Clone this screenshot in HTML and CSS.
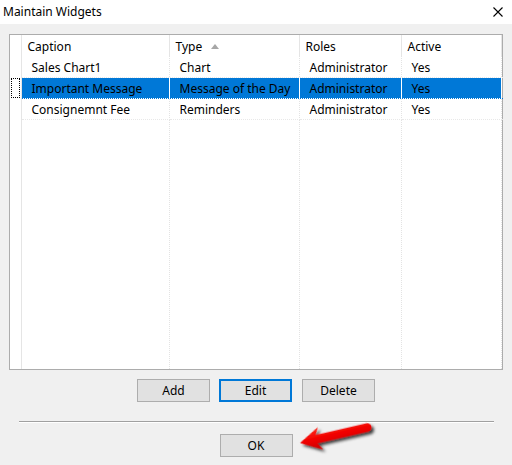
FILE: index.html
```html
<!DOCTYPE html>
<html lang="en">
<head>
    <meta charset="UTF-8">
    <title>Maintain Widgets</title>
    <link rel="stylesheet" href="styles.css">
</head>
<body>
    <div class="window">
        <div class="title-bar">
            <span class="title">Maintain Widgets</span>
            <svg class="close" width="10" height="10" viewBox="0 0 10 10">
                <path d="M0.5 0.5 L9.5 9.5 M9.5 0.5 L0.5 9.5" stroke="#000" stroke-width="1.1" fill="none"/>
            </svg>
        </div>

        <div class="content">
            <div class="grid">
                <table class="widgets">
                    <colgroup>
                        <col class="c-sel">
                        <col class="c-caption">
                        <col class="c-type">
                        <col class="c-roles">
                        <col class="c-active">
                        <col>
                    </colgroup>
                    <thead>
                        <tr>
                            <th></th>
                            <th>Caption</th>
                            <th>Type <span class="sort-up"></span></th>
                            <th>Roles</th>
                            <th>Active</th>
                            <th class="rest"></th>
                        </tr>
                    </thead>
                    <tbody>
                        <tr>
                            <td class="sel"></td>
                            <td>Sales Chart1</td>
                            <td>Chart</td>
                            <td>Administrator</td>
                            <td>Yes</td>
                            <td class="rest"></td>
                        </tr>
                        <tr class="selected">
                            <td class="sel"><span class="focus"></span></td>
                            <td>Important Message</td>
                            <td>Message of the Day</td>
                            <td>Administrator</td>
                            <td>Yes</td>
                            <td class="rest"></td>
                        </tr>
                        <tr>
                            <td class="sel"></td>
                            <td>Consignemnt Fee</td>
                            <td>Reminders</td>
                            <td>Administrator</td>
                            <td>Yes</td>
                            <td class="rest"></td>
                        </tr>
                        <tr class="filler">
                            <td class="sel"></td>
                            <td></td>
                            <td></td>
                            <td></td>
                            <td></td>
                            <td class="rest"></td>
                        </tr>
                    </tbody>
                </table>
            </div>

            <div class="actions">
                <button class="btn">Add</button>
                <button class="btn default">Edit</button>
                <button class="btn">Delete</button>
            </div>

            <div class="separator"></div>

            <div class="footer">
                <button class="btn">OK</button>
            </div>
        </div>

        <!-- red callout arrow pointing at OK -->
        <svg class="callout" width="512" height="465" viewBox="0 0 512 465">
            <defs>
                <filter id="shadow" x="-20%" y="-40%" width="150%" height="200%">
                    <feDropShadow dx="2" dy="3" stdDeviation="1.6" flood-color="#000" flood-opacity="0.75"/>
                </filter>
                <linearGradient id="red" x1="0" y1="0" x2="0" y2="1">
                    <stop offset="0" stop-color="#ff2a1a"/>
                    <stop offset="0.5" stop-color="#f00000"/>
                    <stop offset="1" stop-color="#c80000"/>
                </linearGradient>
            </defs>
            <g transform="translate(300 443) rotate(-13)" filter="url(#shadow)">
                <path d="M0 0 L21 -11.5 L17 -4.2 L69 -4.2 A4.2 4.2 0 0 1 69 4.2 L17 4.2 L21 11.5 Z" fill="url(#red)"/>
            </g>
        </svg>
    </div>
</body>
</html>
```

FILE: styles.css
```css
* {
    margin: 0;
    padding: 0;
    box-sizing: border-box;
}

body {
    font-family: "Noto Sans", "Open Sans", sans-serif;
    font-size: 12px;
    color: #000;
    background: #f0f0f0;
}

.window {
    position: relative;
    width: 512px;
    height: 465px;
    background: #f0f0f0;
}

.title-bar {
    height: 24px;
    background: #fff;
    display: flex;
    align-items: center;
    justify-content: space-between;
    padding: 0 9px 1px 3px;
}

.title {
    font-size: 12px;
}

.close {
    display: block;
    margin-top: 1px;
}

.content {
    padding-top: 10px;
}

/* list view */
.grid {
    margin-left: 9px;
    width: 494px;
    height: 336px;
    border: 1px solid #acacac;
    background: #fff;
}

.widgets {
    width: 492px;
    height: 334px;
    border-collapse: collapse;
    table-layout: fixed;
}

.c-sel { width: 11px; }
.c-caption { width: 148px; }
.c-type { width: 130px; }
.c-roles { width: 102px; }
.c-active { width: 100px; }

.widgets th {
    height: 21px;
    font-weight: normal;
    text-align: left;
    padding: 1px 0 0 6px;
    border-right: 1px solid #e5e5e5;
    white-space: nowrap;
}

.widgets td {
    height: 21px;
    padding: 2px 0 0 10px;
    border-right: 1px dotted #e3e3e3;
    border-bottom: 1px dotted #e8e8e8;
    white-space: nowrap;
    overflow: hidden;
}

.widgets th.rest,
.widgets td.rest {
    border-right: none;
    padding: 0;
}

.widgets td.sel {
    padding: 0;
    border-right: 1px solid #e5e5e5;
    border-bottom: none;
}

.widgets tr.selected td {
    background: #0078d7;
    border-right: 1px solid #fff;
    border-bottom-color: #0078d7;
}

.widgets tr.selected td.sel {
    background: #fff;
    border-right-color: #e5e5e5;
}

.widgets tr.selected td.rest {
    border-right: none;
}

.focus {
    display: block;
    width: 9px;
    height: 20px;
    margin-left: 1px;
    border: 1px dotted #000;
}

.widgets tr.filler td {
    height: auto;
    border-bottom: none;
}

.sort-up {
    display: inline-block;
    width: 0;
    height: 0;
    margin-left: 6px;
    vertical-align: 2px;
    border-left: 4.5px solid transparent;
    border-right: 4.5px solid transparent;
    border-bottom: 5px solid #a7a7a7;
}

/* buttons */
.actions {
    margin-top: 9px;
    display: flex;
    justify-content: center;
    gap: 9px;
}

.actions .btn:last-child {
    margin-left: 1px;
}

.btn {
    width: 73px;
    height: 23px;
    font-family: inherit;
    font-size: 12px;
    color: #000;
    background: #e1e1e1;
    border: 1px solid #adadad;
    border-radius: 0;
}

.btn.default {
    border: 2px solid #0078d7;
}

.separator {
    margin: 19px 0 0 19px;
    width: 475px;
    height: 2px;
    border-top: 1px solid #a0a0a0;
    border-bottom: 1px solid #fff;
}

.footer {
    margin-top: 11px;
    display: flex;
    justify-content: center;
}

.callout {
    position: absolute;
    left: 0;
    top: 0;
    pointer-events: none;
}
```
